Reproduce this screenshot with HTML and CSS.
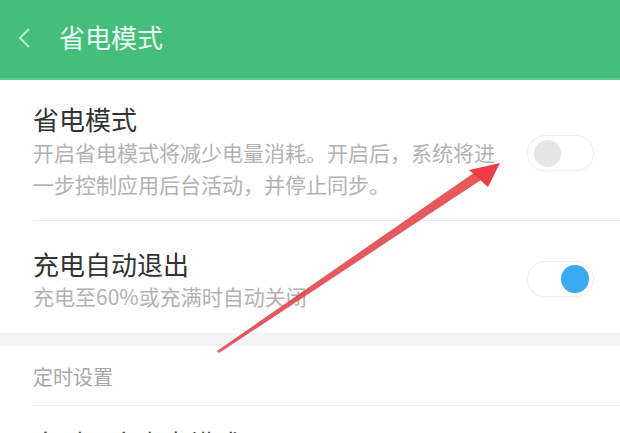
FILE: index.html
```html
<!DOCTYPE html>
<html lang="zh">
<head>
<meta charset="utf-8">
<link rel="stylesheet" href="styles.css">
</head>
<body>
<div class="screen">
  <header class="topbar">
    <svg class="back" width="14" height="22" viewBox="0 0 14 22"><path d="M12 2 L3 11 L12 20" fill="none" stroke="#b9ecd0" stroke-width="2"/></svg>
    <span class="topbar-title">省电模式</span>
  </header>
  <section class="group">
    <div class="row row-first">
      <div class="row-text">
        <div class="row-title">省电模式</div>
        <div class="row-sub">开启省电模式将减少电量消耗。开启后，系统将进一步控制应用后台活动，并停止同步。</div>
      </div>
      <div class="switch"><span class="knob"></span></div>
    </div>
    <div class="row row-second">
      <div class="row-text">
        <div class="row-title">充电自动退出</div>
        <div class="row-sub">充电至60%或充满时自动关闭</div>
      </div>
      <div class="switch on"><span class="knob"></span></div>
    </div>
  </section>
  <div class="gap"></div>
  <section class="group">
    <div class="section-label">定时设置</div>
    <div class="row row-partial">
      <div class="row-title">定时开启省电模式</div>
    </div>
  </section>
  <svg class="arrow" width="620" height="433" viewBox="0 0 620 433">
    <polygon points="217,351 219,353 484,178 478,170" fill="#e2474b" opacity="0.9"/>
    <polygon points="500,163 469,170 488,187" fill="#ef3d45"/>
  </svg>
</div>
</body>
</html>
```
FILE: styles.css
```css
* { box-sizing: border-box; }
html, body { margin: 0; padding: 0; background: #fff; }
body { font-family: "Noto Sans CJK SC", "Noto Sans", sans-serif; }
.screen { position: relative; width: 620px; height: 433px; overflow: hidden; background: #fff; }
.topbar {
  height: 80px;
  background: #46be7b;
  display: flex;
  align-items: center;
  padding-left: 17px;
  gap: 28px;
  border-bottom: 2px solid #5fcc90;
}
.back { display: block; margin-top: -2px; }
.topbar-title { color: #e9fbf0; font-size: 26px; line-height: 34px; margin-top: -4px; }
.group { padding-left: 33px; }
.row {
  display: flex;
  align-items: center;
  border-bottom: 1px solid #ececec;
  padding-right: 26px;
}
.row-first { height: 141px; padding-top: 2px; }
.row-second { height: 112px; border-bottom: none; padding-top: 4px; }
.row-text { flex: 1; }
.row-title { font-size: 26px; line-height: 34px; color: #333; }
.row-sub { font-size: 21px; line-height: 32px; color: #b2b2b2; width: 466px; }
.row-second .row-sub { line-height: 30px; }
.switch {
  width: 67px;
  height: 36px;
  border: 1px solid #efefef;
  border-radius: 18px;
  background: #fff;
  display: flex;
  align-items: center;
  padding: 0 6px;
  margin-top: 4px;
  box-shadow: 0 1px 2px rgba(0,0,0,0.03);
}
.row-second .switch { margin-top: 0; }
.knob { width: 27px; height: 27px; border-radius: 50%; background: #e6e6e6; }
.switch.on { justify-content: flex-end; padding-right: 4px; }
.switch.on .knob { background: #3ba9ef; width: 28px; height: 28px; }
.gap { height: 13px; background: #f4f4f4; }
.section-label {
  height: 60px;
  display: flex;
  align-items: center;
  font-size: 20px;
  color: #a8a8a8;
  border-bottom: 1px solid #ececec;
  padding-top: 2px;
}
.row-partial { border-bottom: none; height: 60px; align-items: flex-start; padding-top: 20px; }
.row-partial .row-title { font-size: 26px; color: #444; }
.arrow { position: absolute; left: 0; top: 0; pointer-events: none; }
```
